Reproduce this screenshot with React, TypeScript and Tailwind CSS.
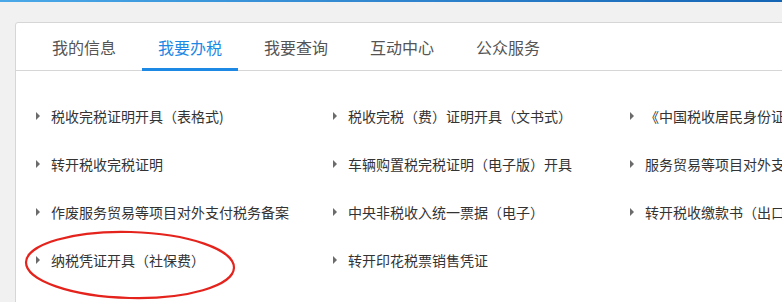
const tabs = ["我的信息", "我要办税", "我要查询", "互动中心", "公众服务"];

const rows = [
  ["税收完税证明开具（表格式)", "税收完税（费）证明开具（文书式）", "《中国税收居民身份证明》开具"],
  ["转开税收完税证明", "车辆购置税完税证明（电子版）开具", "服务贸易等项目对外支付税务备案"],
  ["作废服务贸易等项目对外支付税务备案", "中央非税收入统一票据（电子）", "转开税收缴款书（出口货物劳务专用）"],
  ["纳税凭证开具（社保费）", "转开印花税票销售凭证", ""],
];

function Caret() {
  return (
    <svg width="5" height="8" viewBox="0 0 5 8" className="shrink-0">
      <path d="M0 0 L4 4 L0 8 Z" fill="#6b6b6b" />
    </svg>
  );
}

export default function App() {
  return (
    <div
      className="relative w-[782px] h-[302px] overflow-hidden bg-[#f1f1f1]"
      style={{ fontFamily: '"Microsoft YaHei", "Noto Sans CJK SC", sans-serif' }}
    >
      <div className="h-[2px] bg-gradient-to-r from-[#4aa8e8] to-[#1565b5]" />

      <div className="ml-[15px] mt-[20px] w-[1000px] h-[320px] bg-white border border-[#d6d6d6] rounded-tl-[3px]">
        {/* tabs */}
        <div className="flex gap-[10px] pl-[20px] h-[48px] border-b border-[#d6d6d6]">
          {tabs.map((t, i) => (
            <div
              key={t}
              className={
                i === 1
                  ? "w-[96px] flex items-center justify-center text-[16px] text-[#1e88e5] border-b-[3px] border-[#1e88e5] pt-[3px] -mb-[1px]"
                  : "w-[96px] flex items-center justify-center text-[16px] text-[#555]"
              }
            >
              {t}
            </div>
          ))}
        </div>

        {/* list */}
        <div className="pt-[21px] pl-[20px]">
          {rows.map((r, ri) => (
            <div key={ri} className="flex h-[48px] items-center">
              {r.map((c, ci) => (
                <div key={ci} className="w-[297px] shrink-0 flex items-center gap-[10px] whitespace-nowrap text-[14px] text-[#333]">
                  {c && <Caret />}
                  {c && <span>{c}</span>}
                </div>
              ))}
            </div>
          ))}
        </div>
      </div>

      {/* hand-drawn red ellipse */}
      <svg className="absolute left-[20px] top-[228px]" width="224" height="76" viewBox="0 0 224 76">
        <ellipse
          cx="110"
          cy="37"
          rx="104"
          ry="33"
          transform="rotate(1.5 110 37)"
          fill="none"
          stroke="#e5231d"
          strokeWidth="2.2"
        />
      </svg>
    </div>
  );
}
